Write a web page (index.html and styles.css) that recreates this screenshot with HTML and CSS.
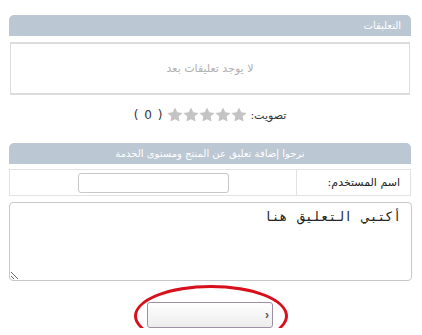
FILE: index.html
```html
<!DOCTYPE html>
<html lang="ar" dir="rtl">
<head>
  <meta charset="utf-8">
  <title>التعليقات</title>
  <link rel="stylesheet" href="styles.css">
</head>
<body>
  <div class="reviews">
    <div class="bar">التعليقات</div>
    <div class="empty-box">لا يوجد تعليقات بعد</div>

    <div class="rating">
      <span class="rating-label">تصويت:</span>
      <span class="stars">
        <svg viewBox="0 0 16 16"><path d="M8 .5l2.3 4.7 5.2.7-3.8 3.6.9 5.1L8 12.2l-4.6 2.4.9-5.1L.5 5.9l5.2-.7z"/></svg>
        <svg viewBox="0 0 16 16"><path d="M8 .5l2.3 4.7 5.2.7-3.8 3.6.9 5.1L8 12.2l-4.6 2.4.9-5.1L.5 5.9l5.2-.7z"/></svg>
        <svg viewBox="0 0 16 16"><path d="M8 .5l2.3 4.7 5.2.7-3.8 3.6.9 5.1L8 12.2l-4.6 2.4.9-5.1L.5 5.9l5.2-.7z"/></svg>
        <svg viewBox="0 0 16 16"><path d="M8 .5l2.3 4.7 5.2.7-3.8 3.6.9 5.1L8 12.2l-4.6 2.4.9-5.1L.5 5.9l5.2-.7z"/></svg>
        <svg viewBox="0 0 16 16"><path d="M8 .5l2.3 4.7 5.2.7-3.8 3.6.9 5.1L8 12.2l-4.6 2.4.9-5.1L.5 5.9l5.2-.7z"/></svg>
      </span>
      <span class="count" dir="ltr">( 0 )</span>
    </div>

    <div class="bar bar-center">نرجوا إضافة تعليق عن المنتج ومستوى الخدمة</div>
    <div class="form-row">
      <div class="form-label">اسم المستخدم:</div>
      <div class="form-field"><input type="text" class="name-input"></div>
    </div>
    <textarea class="comment">أكتبي التعليق هنا</textarea>

    <div class="submit-wrap">
      <button class="submit"><span class="arrow">&lsaquo;</span></button>
      <div class="circle"></div>
    </div>
  </div>
</body>
</html>
```

FILE: styles.css
```css
body {
  margin: 0;
  background: #fff;
  font-family: "DejaVu Sans", Tahoma, sans-serif;
  font-size: 11px;
}

.reviews {
  width: 402px;
  margin: 15px 11px 0 0;
}

.bar {
  height: 21px;
  line-height: 21px;
  background: #bcc7d4;
  color: #fff;
  border-radius: 5px 5px 0 0;
  padding-right: 10px;
  font-size: 10px;
}

.bar-center {
  text-align: center;
  padding-right: 0;
}

.empty-box {
  margin: 6px 1px 0 1px;
  height: 49px;
  border: 1px solid #dcdcdc;
  border-top-width: 2px;
  border-bottom-width: 2px;
  text-align: center;
  line-height: 50px;
  color: #b0b0b0;
  font-size: 11px;
}

.rating {
  display: flex;
  justify-content: center;
  align-items: center;
  gap: 3px;
  height: 20px;
  margin: 10px 0 18px 0;
  color: #333;
  font-size: 11px;
}

.stars {
  display: flex;
}

.stars svg {
  width: 16px;
  height: 16px;
  fill: #c4c4c4;
}

.count {
  font-size: 12px;
  margin-right: 2px;
  word-spacing: 2px;
}

.form-row {
  display: flex;
  margin-top: 5px;
  height: 25px;
  border: 1px solid #e2e2e2;
}

.form-label {
  width: 103px;
  padding-right: 10px;
  border-left: 1px solid #e2e2e2;
  line-height: 26px;
  color: #222;
  font-size: 11px;
}

.form-field {
  flex: 1;
  display: flex;
  align-items: center;
  padding-right: 67px;
}

.name-input {
  width: 145px;
  height: 16px;
  border: 1px solid #c8c8c8;
  border-radius: 3px;
  padding: 1px 2px;
}

.comment {
  display: block;
  box-sizing: border-box;
  width: 403px;
  height: 79px;
  margin: 6px -1px 0 0;
  padding: 6px 10px;
  border: 1px solid #c8c8c8;
  border-radius: 4px;
  font-family: "DejaVu Sans Mono", monospace;
  font-size: 13px;
  letter-spacing: 4px;
  word-spacing: 2px;
  color: #222;
  resize: both;
}

.submit-wrap {
  position: relative;
  width: 126px;
  margin: 21px auto 0 auto;
}

.submit {
  display: block;
  width: 126px;
  height: 26px;
  border: 1px solid #9d90a5;
  border-radius: 3px;
  background: linear-gradient(#fff, #ececec);
  padding: 0;
}

.arrow {
  display: block;
  text-align: right;
  padding-right: 3px;
  color: #555;
  font-size: 12px;
  font-weight: bold;
}

.circle {
  position: absolute;
  top: -17px;
  left: -13px;
  width: 148px;
  height: 56px;
  border: 3px solid #d8101c;
  border-radius: 50%;
}
```
